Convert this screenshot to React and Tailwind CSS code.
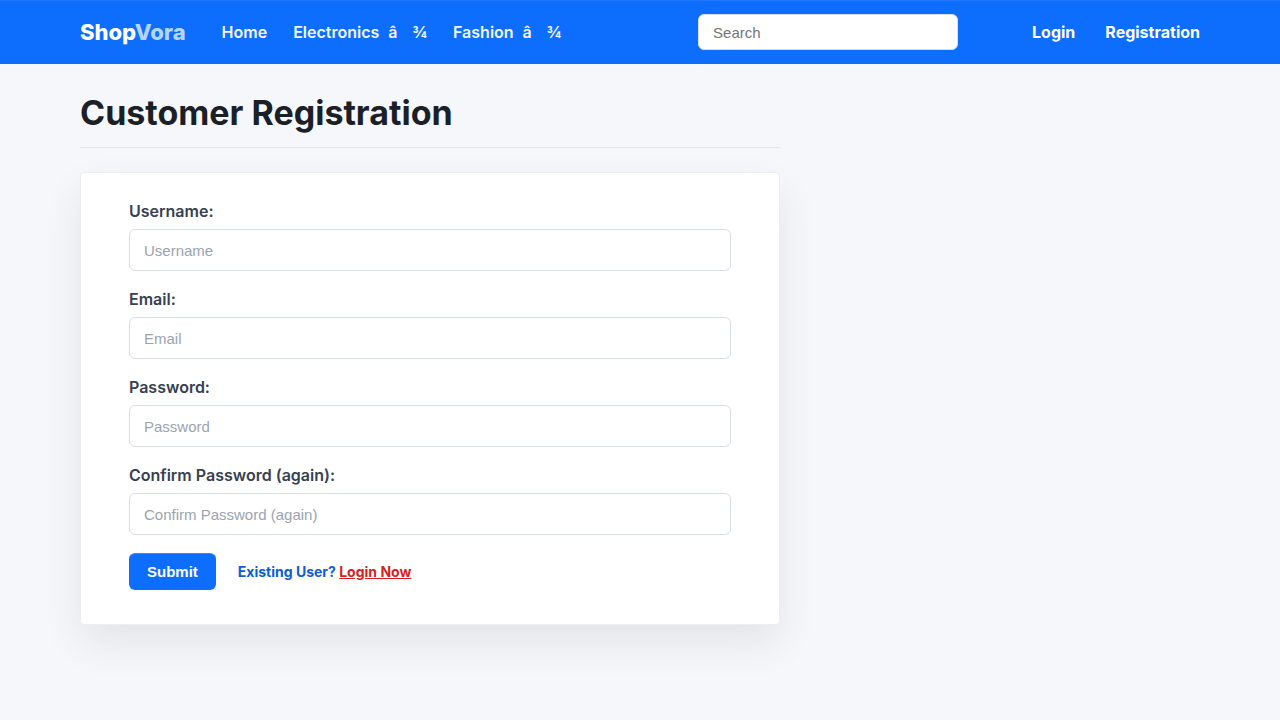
const fields = [
  { id: 'username', label: 'Username:', placeholder: 'Username', type: 'text' },
  { id: 'email', label: 'Email:', placeholder: 'Email', type: 'email' },
  { id: 'password', label: 'Password:', placeholder: 'Password', type: 'password' },
  { id: 'confirm', label: 'Confirm Password (again):', placeholder: 'Confirm Password (again)', type: 'password' },
];

function NavMenu({ label }) {
  return (
    <a href="#" className="flex items-center gap-[9px]">
      <span>{label}</span>
      <span className="flex gap-0.5">
        <span>â</span>
        <span>{'\u0096¾'}</span>
      </span>
    </a>
  );
}

function Header() {
  return (
    <header className="bg-[#0d6efd] text-white shadow-[inset_0_1px_0_#2079ff]">
      <div className="mx-auto flex h-16 max-w-[1120px] items-center">
        <a href="#" className="mr-9 text-[22px] font-extrabold">
          Shop<span className="text-[#b6d4fe]">Vora</span>
        </a>
        <nav className="flex items-center gap-[26px] font-semibold text-[#f1f6ff]">
          <a href="#">Home</a>
          <NavMenu label="Electronics" />
          <NavMenu label="Fashion" />
        </nav>
        <input
          type="search"
          aria-label="Search"
          placeholder="Search"
          className="ml-auto h-9 w-[260px] rounded-md border border-[#d9dde3] bg-white px-3.5 font-[Liberation_Sans,Arial,sans-serif] text-[15px] text-gray-900 placeholder:text-[#757575]"
        />
        <div className="ml-[74px] flex items-center gap-[30px] font-bold">
          <a href="#">Login</a>
          <a href="#">Registration</a>
        </div>
      </div>
    </header>
  );
}

export default function App() {
  return (
    <div className="min-h-screen bg-[#f5f7fb] font-[Inter,sans-serif] text-base text-[#1b1f27]">
      <Header />
      <main className="mx-auto max-w-[1120px] pt-6 pb-12">
        <div className="max-w-[700px]">
          <h1 className="border-b border-[#e2e5ec] pb-2.5 text-[34px] leading-[49px] font-bold">Customer Registration</h1>
          <form className="mt-6 rounded-[4px] border border-[#eceef2] bg-white px-12 pt-7 pb-[34px] shadow-[0_18px_40px_rgba(0,0,0,0.08)]">
            {fields.map((f) => (
              <div key={f.id} className="mb-[18px]">
                <label htmlFor={f.id} className="mb-2 block leading-5 font-semibold text-[#374151]">
                  {f.label}
                </label>
                <input
                  id={f.id}
                  type={f.type}
                  placeholder={f.placeholder}
                  className="block h-[42px] w-full rounded-md border border-[#d8dde6] bg-white px-3.5 font-[Liberation_Sans,Arial,sans-serif] text-[15px] placeholder:text-[#9ca3af]"
                />
              </div>
            ))}
            <div className="flex items-center gap-[22px]">
              <button
                type="submit"
                className="rounded-md border-t border-[#3a89fd] bg-[#0d6efd] px-[18px] py-2 font-[Liberation_Sans,Arial,sans-serif] text-[15px] leading-5 font-bold text-white"
              >
                Submit
              </button>
              <p className="text-sm font-bold text-[#0b5ed7]">
                Existing User?{' '}
                <a href="#" className="text-[#d61f1f] underline">
                  Login Now
                </a>
              </p>
            </div>
          </form>
        </div>
      </main>
    </div>
  );
}
